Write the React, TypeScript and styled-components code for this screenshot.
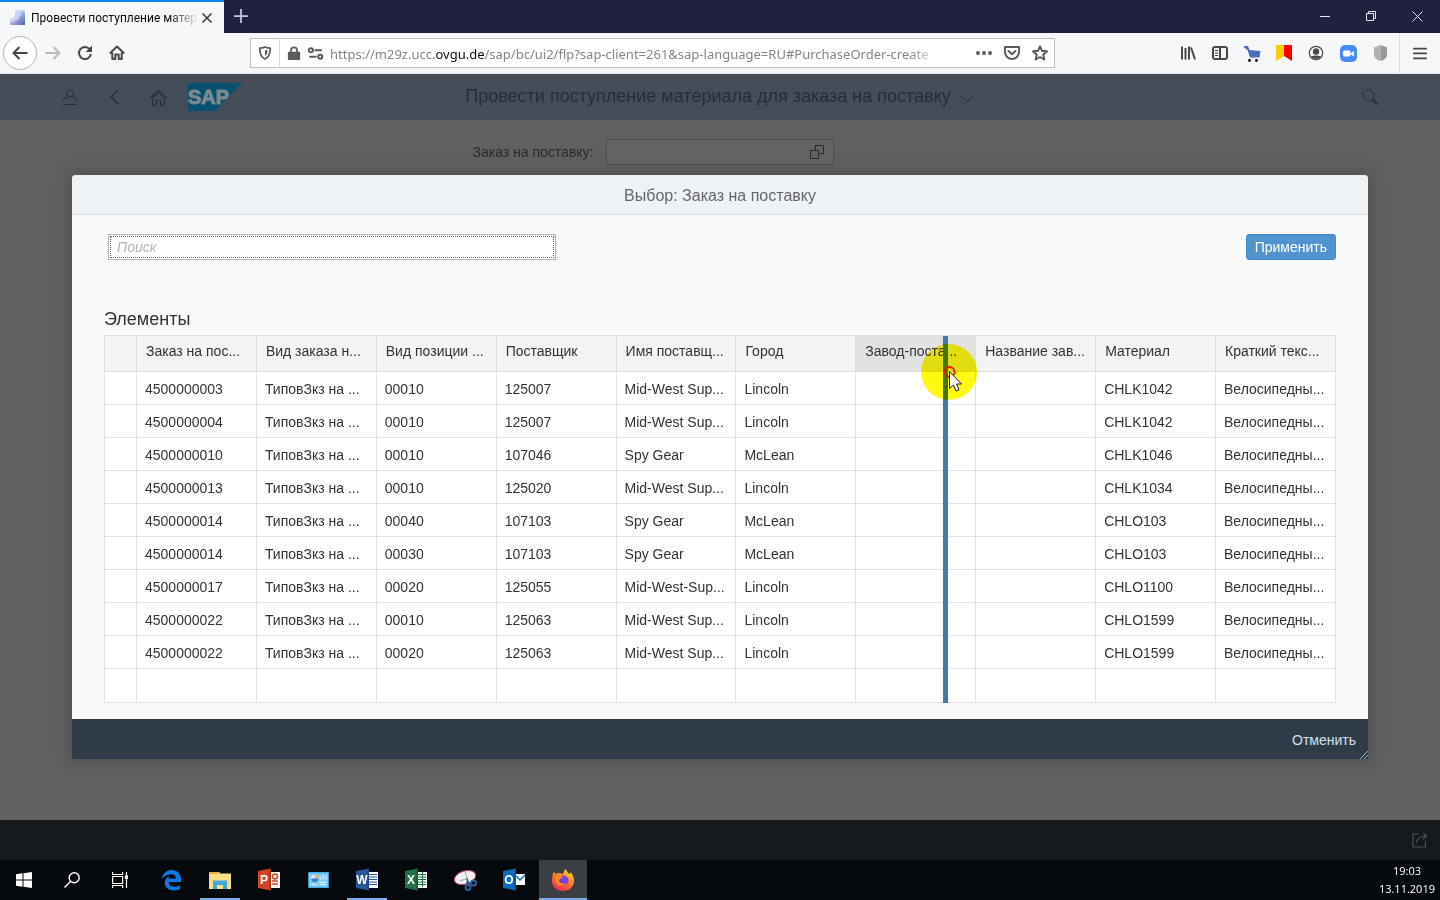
import React from "react";
import styled, { createGlobalStyle } from "styled-components";

const GlobalStyle = createGlobalStyle`
  *, *::before, *::after { box-sizing: border-box; }
  body { margin: 0; background: #606060; }
  button, input { font: inherit; }
`;

const ui = `"Liberation Sans", Arial, sans-serif`;
const system = `"Noto Sans", "Open Sans", sans-serif`;

const Screen = styled.div`
  min-height: 100vh;
  display: flex;
  flex-direction: column;
  font-family: ${ui};
  font-size: 14px;
  color: #333;
`;

const IconButton = styled.button<{ $w?: number; $muted?: boolean }>`
  width: ${(p) => p.$w ?? 32}px;
  height: 32px;
  flex: none;
  padding: 0;
  border: 0;
  background: none;
  color: ${(p) => (p.$muted ? "#b9b9bd" : "inherit")};
  display: flex;
  align-items: center;
  justify-content: center;
`;

/* ---------- browser chrome ---------- */

const TabStrip = styled.header`
  height: 33px;
  display: flex;
  background: #21213f;
  color: #e8e8f4;
`;

const Tab = styled.div`
  width: 224px;
  display: flex;
  align-items: center;
  padding: 0 9px 0 10px;
  background: #f6f7f9;
  border-top: 2px solid #0a84ff;
  color: #0c0c0d;
  font: 12px/16px Roboto, sans-serif;
`;

const Favicon = styled.svg`
  flex: none;
`;

const TabTitle = styled.span`
  flex: 1;
  margin-left: 5px;
  white-space: nowrap;
  mask-image: linear-gradient(to left, transparent, #000 30px);
`;

const TabClose = styled(IconButton)`
  width: 16px;
  height: 22px;
  color: #3c3c40;
`;

const NewTab = styled(IconButton)`
  width: 34px;
  color: #c9c6e2;
`;

const WindowControls = styled.div`
  margin-left: auto;
  display: flex;
`;

const NavBar = styled.nav`
  height: 41px;
  display: flex;
  align-items: center;
  background: #f6f7f9;
  border-bottom: 1px solid #e4e8ec;
  color: #47474c;
`;

const NavGroup = styled.div`
  width: 250px;
  flex: none;
  display: flex;
  align-items: center;
  padding-left: 3px;
`;

const BackButton = styled(IconButton)`
  width: 34px;
  height: 34px;
  border: 1px solid #b4b4b8;
  border-radius: 50%;
  background: #fdfdfd;
`;

const AddressBar = styled.div`
  flex: 1;
  min-width: 0;
  height: 30px;
  display: flex;
  align-items: center;
  background: #fff;
  border: 1px solid #bcc0c4;
  color: #5a5a60;
`;

const Divider = styled.span<{ $h: number }>`
  width: 1px;
  height: ${(p) => p.$h}px;
  background: #dcdcde;
`;

const Url = styled.div`
  flex: 1;
  min-width: 0;
  margin: 2px 30px 0 0;
  white-space: nowrap;
  font: 13px/20px ${system};
  color: #85858a;
  mask-image: linear-gradient(to left, transparent, #000 30px);
  b { font-weight: 400; color: #0c0c0d; }
`;

const Extensions = styled.div`
  width: 385px;
  flex: none;
  display: flex;
  align-items: center;
  justify-content: flex-end;
`;

const MenuArea = styled.div`
  display: flex;
  align-items: center;
  margin-left: 3px;
`;

/* ---------- page ---------- */

const Page = styled.main`
  position: relative;
  flex: 1;
  display: flex;
  flex-direction: column;
  background: #606060;
`;

const Shell = styled.div`
  height: 46px;
  display: flex;
  align-items: center;
  justify-content: space-between;
  padding: 0 54px;
  background: linear-gradient(#484a57, #444e58 12px, #454d57);
  color: #222e3a;
`;

const ShellSide = styled.div`
  flex: 1;
  display: flex;
  align-items: center;
  gap: 12px;
  &:last-child { justify-content: flex-end; }
`;

const Logo = styled.svg`
  margin-left: 2px;
`;

const ShellTitle = styled.h1`
  margin: 0;
  padding-bottom: 2px;
  display: flex;
  align-items: center;
  gap: 8px;
  font-size: 18px;
  line-height: 24px;
  font-weight: 400;
`;

const FormRow = styled.div`
  display: flex;
  align-items: center;
  justify-content: center;
  gap: 12px;
  padding: 19px 134px 0 0;
  color: #2a2a2a;
`;

const OrderField = styled.div`
  width: 228px;
  height: 26px;
  display: flex;
  align-items: center;
  border: 1px solid #4c4c4c;
  background: #636363;
`;

const OrderInput = styled.input`
  flex: 1;
  min-width: 0;
  border: 0;
  padding: 0 8px;
  background: none;
  outline: none;
`;

const Dialog = styled.section`
  position: absolute;
  inset: 101px 5% auto;
  display: flex;
  flex-direction: column;
  border-radius: 4px 4px 0 0;
  overflow: hidden;
  background: #fafafa;
  box-shadow: 0 0 16px rgba(0, 0, 0, 0.25);
`;

const DialogTitle = styled.h2`
  margin: 0;
  height: 40px;
  background: #edf2f7;
  border-bottom: 1px solid #d9dfe5;
  text-align: center;
  font-size: 16px;
  line-height: 42px;
  font-weight: 400;
  color: #666;
`;

const DialogBody = styled.div`
  padding: 19px 32px 16px;
`;

const SearchRow = styled.div`
  display: flex;
  justify-content: space-between;
  padding-left: 4px;
`;

const SearchInput = styled.input`
  width: 448px;
  height: 26px;
  padding: 0 8px;
  border: 1px solid #b4b4b4;
  outline: 1px dotted #666;
  outline-offset: -3px;
  background: #fff;
  &::placeholder { color: #b4b4b4; font-style: italic; opacity: 1; }
`;

const ApplyButton = styled.button`
  height: 26px;
  padding: 0 8px;
  border: 1px solid #428bc8;
  border-radius: 3px;
  background: #5093cf;
  color: #fff;
  line-height: 24px;
`;

const TableTitle = styled.h3`
  margin: 47px 0 4px;
  font-size: 18px;
  line-height: 24px;
  font-weight: 400;
`;

const TableWrap = styled.div`
  position: relative;
`;

const Table = styled.table`
  width: 100%;
  table-layout: fixed;
  border-collapse: collapse;
  background: #fff;
`;

const SelectorCol = styled.col`
  width: 32px;
`;

const HeadCell = styled.th<{ $active?: boolean }>`
  height: 36px;
  padding: 0 0 5px 9px;
  border: 1px solid #dedede;
  background: ${(p) => (p.$active ? "#e2e2e2" : "#f3f3f3")};
  text-align: left;
  font-weight: 400;
  white-space: nowrap;
`;

const Cell = styled.td<{ $last?: boolean }>`
  height: ${(p) => (p.$last ? 34 : 33)}px;
  padding: 1px 0 0 8px;
  border: 1px solid #e2e2e2;
  white-space: nowrap;
`;

const ResizeBar = styled.div`
  position: absolute;
  top: 1px;
  bottom: 0;
  left: calc(68% + 1px);
  width: 5px;
  background: #4479a8;
`;

const PointerHalo = styled.svg`
  position: absolute;
  top: 8px;
  left: calc(68% - 22px);
  mix-blend-mode: multiply;
`;

const PointerArrow = styled.svg`
  position: absolute;
  top: 29px;
  left: 68%;
`;

const DialogFooter = styled.footer`
  position: relative;
  height: 40px;
  display: flex;
  align-items: center;
  justify-content: flex-end;
  padding: 2px 12px 0 0;
  background: #2f3c48;
`;

const CancelButton = styled.button`
  border: 0;
  padding: 0;
  background: none;
  color: #d3e0ea;
  line-height: 20px;
`;

const Grip = styled.svg`
  position: absolute;
  right: 0;
  bottom: 0;
`;

const PageFooter = styled.div`
  height: 40px;
  display: flex;
  align-items: center;
  justify-content: flex-end;
  padding-right: 4px;
  background: #14191d;
  color: #4a5055;
`;

/* ---------- task bar ---------- */

const TaskBar = styled.footer`
  height: 40px;
  display: flex;
  background: #06090d;
  color: #fff;
`;

const TaskApps = styled.div`
  margin-left: 3px;
  display: flex;
  gap: 1px;
`;

const TaskButton = styled.button<{ $state?: "open" | "active" }>`
  width: 48px;
  height: 40px;
  padding: 0;
  border: 0;
  color: inherit;
  display: flex;
  align-items: center;
  justify-content: center;
  background: ${(p) =>
    p.$state === "active"
      ? "linear-gradient(#3b3e43 38px, #76b0e8 38px)"
      : p.$state === "open"
      ? "linear-gradient(#76b0e8, #76b0e8) center bottom / 40px 2px no-repeat"
      : "none"};
`;

const Clock = styled.div`
  margin-left: auto;
  padding: 2px 5px 0 0;
  text-align: center;
  font: 11px/18px "Open Sans", sans-serif;
`;

const columns = [
  "Заказ на пос...", "Вид заказа н...", "Вид позиции ...", "Поставщик", "Имя поставщ...",
  "Город", "Завод-поста...", "Название зав...", "Материал", "Краткий текс...",
];

const MW = "Mid-West Sup...";
const orders = [
  ["4500000003", "00010", "125007", MW, "Lincoln", "CHLK1042"],
  ["4500000004", "00010", "125007", MW, "Lincoln", "CHLK1042"],
  ["4500000010", "00010", "107046", "Spy Gear", "McLean", "CHLK1046"],
  ["4500000013", "00010", "125020", MW, "Lincoln", "CHLK1034"],
  ["4500000014", "00040", "107103", "Spy Gear", "McLean", "CHLO103"],
  ["4500000014", "00030", "107103", "Spy Gear", "McLean", "CHLO103"],
  ["4500000017", "00020", "125055", "Mid-West-Sup...", "Lincoln", "CHLO1100"],
  ["4500000022", "00010", "125063", MW, "Lincoln", "CHLO1599"],
  ["4500000022", "00020", "125063", MW, "Lincoln", "CHLO1599"],
];

type IconProps = { size?: number; sw?: number; children: React.ReactNode };
const Icon = ({ size = 16, sw = 2, children }: IconProps) => (
  <svg width={size} height={size} viewBox="0 0 16 16" fill="none" stroke="currentColor" strokeWidth={sw} strokeLinejoin="round" aria-hidden="true">
    {children}
  </svg>
);

const Office = ({ letter, color, dark, children }: { letter: string; color: string; dark: string; children: React.ReactNode }) => (
  <svg width="24" height="24" viewBox="0 0 24 24" aria-hidden="true">
    <path d="M12 4h11v16H12z" fill="#fff" />
    {children}
    <path d="M1 3l13-2.500v22L1 20z" fill={color} />
    <path d="M12 .900l2-.400v22l-2-.300z" fill={dark} opacity=".5" />
    <text x="7" y="16" textAnchor="middle" fontFamily="Liberation Sans" fontWeight="700" fontSize="12" fill="#fff">{letter}</text>
  </svg>
);

export default function App() {
  return (
    <Screen>
      <GlobalStyle />
      <TabStrip>
        <Tab>
          <Favicon width="16" height="16" viewBox="0 0 16 16" aria-hidden="true">
            <defs>
              <linearGradient id="fav" x1="0" y1="0" x2="1" y2="1">
                <stop offset="0" stopColor="#8fe0f4" />
                <stop offset=".5" stopColor="#b9a5dc" />
                <stop offset="1" stopColor="#3a62b8" />
              </linearGradient>
              <linearGradient id="favSide" x1="0" y1="0" x2="0" y2="1">
                <stop offset="0" stopColor="#9be6f8" />
                <stop offset="1" stopColor="#4a63b4" />
              </linearGradient>
            </defs>
            <path d="M5 1l8-1 2 1v14H0V9q6 0 5-8z" fill="url(#fav)" />
            <path d="M5 1l8-1-4 8q-3 4-9 4V9q6 0 5-8z" fill="#cfe6fa" opacity=".7" />
            <path d="M13 0l2 1v14h-3z" fill="url(#favSide)" opacity=".7" />
          </Favicon>
          <TabTitle>Провести поступление матер</TabTitle>
          <TabClose aria-label="Закрыть вкладку">
            <Icon size={12}><path d="M2 2l12 12M14 2L2 14" /></Icon>
          </TabClose>
        </Tab>
        <NewTab aria-label="Новая вкладка"><Icon size={14}><path d="M8 0v16M0 8h16" /></Icon></NewTab>
        <WindowControls>
          <IconButton $w={46} aria-label="Свернуть"><svg width="10" height="10" stroke="currentColor"><path d="M0 5.500h10" /></svg></IconButton>
          <IconButton $w={46} aria-label="Развернуть">
            <svg width="11" height="11" fill="none" stroke="currentColor"><path d="M.500 2.500h7v7h-7zM2.500 2.500v-2h7v7h-2" /></svg>
          </IconButton>
          <IconButton $w={46} aria-label="Закрыть"><svg width="11" height="11" stroke="currentColor"><path d="M.500.500l10 10M10.500.500l-10 10" /></svg></IconButton>
        </WindowControls>
      </TabStrip>

      <NavBar>
        <NavGroup>
          <BackButton aria-label="Назад"><Icon><path d="M15.500 8H1.500M7.500 2L1.500 8l6 6" /></Icon></BackButton>
          <IconButton $muted aria-label="Вперёд"><Icon><path d="M.500 8h14M8.500 2l6 6-6 6" /></Icon></IconButton>
          <IconButton aria-label="Обновить">
            <Icon><path d="M12.600 4.200A6 6 0 1 0 13.900 9" /><path d="M15 .500v6.500H8.800z" fill="currentColor" stroke="none" /></Icon>
          </IconButton>
          <IconButton aria-label="Домой">
            <Icon><path d="M.800 8.500L8 1.500l7.200 7M3.300 7.500V14h3V9.500h3.400V14h3V7.500" /></Icon>
          </IconButton>
        </NavGroup>
        <AddressBar>
          <IconButton $w={28} aria-label="Защита">
            <Icon size={14}><path d="M8 1.200c2 1 4 1.300 6 1.300 0 6-1 10-6 12.300C3 12.500 2 8.500 2 2.500c2 0 4-.300 6-1.300z" /><path d="M8 4.500v6.500c2-1 3-3 3-6z" fill="currentColor" stroke="none" /></Icon>
          </IconButton>
          <Divider $h={28} />
          <IconButton $w={28} aria-label="Соединение защищено">
            <Icon size={14}><path d="M2 7.500h12V15H2z" fill="currentColor" /><path d="M4.500 7V5a3.500 3.500 0 0 1 7 0v2" /></Icon>
          </IconButton>
          <IconButton $w={22} aria-label="Разрешения">
            <svg width="22" height="13" viewBox="0 0 27 16" fill="none" stroke="currentColor" strokeWidth="2.500">
              <circle cx="3.500" cy="4" r="2.500" /><path d="M8 4h9M1.500 12h9" /><circle cx="15" cy="12" r="2.500" />
            </svg>
          </IconButton>
          <Url>https://m29z.ucc.<b>ovgu.de</b>/sap/bc/ui2/flp?sap-client=261&amp;sap-language=RU#PurchaseOrder-create</Url>
          <IconButton $w={28} aria-label="Действия">
            <Icon><g fill="currentColor" stroke="none"><circle cx="2" cy="8" r="2" /><circle cx="8" cy="8" r="2" /><circle cx="14" cy="8" r="2" /></g></Icon>
          </IconButton>
          <IconButton $w={28} aria-label="Pocket">
            <Icon><path d="M1 2h14v5a7 7 0 0 1-14 0z" /><path d="M4.500 6L8 9.200 11.500 6" strokeLinecap="round" /></Icon>
          </IconButton>
          <IconButton $w={28} aria-label="Закладка">
            <Icon><path d="M8 1.300l2 4.500 5 .500-3.700 3.300 1 4.900L8 12l-4.300 2.500 1-4.900L1 6.300l5-.500z" /></Icon>
          </IconButton>
        </AddressBar>
        <Extensions>
          <IconButton aria-label="Библиотека"><Icon><path d="M2 1.500v13M5.500 3v11.500M9 1.500v13M11 2.500l4 12" /></Icon></IconButton>
          <IconButton aria-label="Боковая панель">
            <Icon><rect x="1" y="2" width="14" height="12" rx="2" /><path d="M8 2v12" /><path d="M3 5.500h3M3 8h3M3 10.500h3" strokeWidth="1" /></Icon>
          </IconButton>
          <IconButton aria-label="Покупки">
            <svg width="17" height="17" viewBox="0 0 17 17">
              <path d="M0 1h4l1.500 4L16.500 6l-1 6.500H6L3.500 5 0 2.500z" fill="#4a6fbd" /><circle cx="5.500" cy="15.500" r="1.400" /><circle cx="12.500" cy="15.500" r="1.400" />
            </svg>
          </IconButton>
          <IconButton aria-label="Закладки">
            <svg width="16" height="16" viewBox="0 0 16 16"><path d="M0 0h8v11l-8 5z" fill="#fc0" /><path d="M8 0h8v16l-8-5z" fill="#f00" /></svg>
          </IconButton>
          <IconButton aria-label="Учётная запись">
            <Icon sw={1.2}><circle cx="8" cy="8" r="6.700" /><circle cx="8" cy="6.500" r="2.600" fill="currentColor" /><path d="M4 11.800c2-1 6-1 8 0-2 1.800-6 1.800-8 0z" fill="currentColor" /></Icon>
          </IconButton>
          <IconButton aria-label="Zoom">
            <svg width="17" height="17" viewBox="0 0 17 17"><rect width="17" height="17" rx="5" fill="#4a8cf5" /><rect x="3" y="5.500" width="7.500" height="6" rx="1.500" fill="#fff" /><path d="M11 8l3-2v5.500l-3-2z" fill="#fff" /></svg>
          </IconButton>
          <IconButton aria-label="Щит">
            <svg width="13" height="16" viewBox="0 0 13 16"><path d="M0 2.500L6.500 0v16Q0 14 0 10z" fill="#b0b0b0" /><path d="M13 2.500L6.500 0v16Q13 14 13 10z" fill="#979797" /></svg>
          </IconButton>
          <MenuArea>
            <Divider $h={40} />
            <IconButton $w={40} aria-label="Меню"><Icon size={14}><path d="M1 3h14M1 8.500h14M1 14h14" strokeLinecap="round" /></Icon></IconButton>
          </MenuArea>
        </Extensions>
      </NavBar>

      <Page>
        <Shell>
          <ShellSide>
            <IconButton aria-label="Пользователь">
              <Icon sw={1}><circle cx="8" cy="4.500" r="3.500" /><path d="M6 8c-3 .500-4.500 2-4.500 4v.500M10 8c3 .500 4.500 2 4.500 4v.500M1 15.500h14" /></Icon>
            </IconButton>
            <IconButton aria-label="Назад"><Icon sw={1.4}><path d="M12 1L5 8l7 7" /></Icon></IconButton>
            <IconButton aria-label="Домой">
              <Icon size={17} sw={1}><path d="M0 8.500L8 1l8 7.500M2 9l6-5.500L14 9M2.500 9v6.500h3.500v-5h4v5h3.500V9" /></Icon>
            </IconButton>
            <Logo width="56" height="28" viewBox="0 0 56 28" role="img" aria-label="SAP">
              <path d="M0 0h54L27 28H0z" fill="#07506f" />
              <text x="0" y="21" fontFamily="Liberation Sans" fontWeight="700" fontSize="20" fill="#7d8a90" stroke="#7d8a90">SAP</text>
            </Logo>
          </ShellSide>
          <ShellTitle>
            Провести поступление материала для заказа на поставку
            <Icon sw={1}><path d="M1 7l7 7 7-7" /></Icon>
          </ShellTitle>
          <ShellSide>
            <IconButton aria-label="Поиск"><Icon sw={1}><circle cx="6.500" cy="6.500" r="5.500" /><path d="M10.500 10.500l5 5" strokeWidth="2" /></Icon></IconButton>
          </ShellSide>
        </Shell>
        <FormRow>
          <label htmlFor="order">Заказ на поставку:</label>
          <OrderField>
            <OrderInput id="order" />
            <IconButton aria-label="Выбрать заказ"><Icon sw={1}><path d="M1.500 6.500h8v8h-8zM6.500 6V1.500h8v8H10" /></Icon></IconButton>
          </OrderField>
        </FormRow>

        <Dialog role="dialog" aria-labelledby="dialog-title">
          <DialogTitle id="dialog-title">Выбор: Заказ на поставку</DialogTitle>
          <DialogBody>
            <SearchRow>
              <SearchInput placeholder="Поиск" aria-label="Поиск" />
              <ApplyButton>Применить</ApplyButton>
            </SearchRow>
            <TableTitle>Элементы</TableTitle>
            <TableWrap>
              <Table>
                <colgroup>
                  <SelectorCol />
                  {columns.map((c) => <col key={c} />)}
                </colgroup>
                <thead>
                  <tr>
                    <HeadCell />
                    {columns.map((c, i) => <HeadCell key={c} scope="col" $active={i === 6}>{c}</HeadCell>)}
                  </tr>
                </thead>
                <tbody>
                  {orders.map(([order, item, vendor, name, city, material], i) => (
                    <tr key={i}>
                      <Cell /><Cell>{order}</Cell><Cell>ТиповЗкз на ...</Cell><Cell>{item}</Cell><Cell>{vendor}</Cell>
                      <Cell>{name}</Cell><Cell>{city}</Cell><Cell /><Cell /><Cell>{material}</Cell><Cell>Велосипедны...</Cell>
                    </tr>
                  ))}
                  <tr>
                    <Cell $last />
                    {columns.map((c) => <Cell $last key={c} />)}
                  </tr>
                </tbody>
              </Table>
              <ResizeBar />
              <PointerHalo width="58" height="58" aria-hidden="true"><circle cx="29" cy="29" r="28" fill="#fffa00" fillOpacity=".94" /></PointerHalo>
              <PointerArrow width="24" height="30" fill="none" aria-hidden="true">
                <circle cx="7.500" cy="8" r="5" stroke="#f01800" strokeWidth="2" />
                <path d="M7.500 7.500v17l4-3.500 2.500 6 3-1.300-2.500-5.700h5z" fill="#fff" stroke="#222" />
              </PointerArrow>
            </TableWrap>
          </DialogBody>
          <DialogFooter>
            <CancelButton>Отменить</CancelButton>
            <Grip width="9" height="9" stroke="#8fb0c8" aria-hidden="true"><path d="M1 9l8-8M5 9l4-4" /></Grip>
          </DialogFooter>
        </Dialog>
      </Page>

      <PageFooter>
        <IconButton aria-label="Поделиться">
          <Icon sw={1.2}><path d="M7 2H1v13h12.500V9M4.500 11C5 6 8 4 14 4M11 1l3.500 3L11 7.500" /></Icon>
        </IconButton>
      </PageFooter>

      <TaskBar>
        <TaskButton aria-label="Пуск">
          <svg width="16" height="16" fill="currentColor"><path d="M0 2.300l6.500-1v6.200H0zM7.500 1.200L16 0v7.500H7.500zM0 8.500h6.500v6.200l-6.500-1zM7.500 8.500H16V16l-8.500-1.200z" /></svg>
        </TaskButton>
        <TaskButton aria-label="Поиск"><Icon sw={1.4}><circle cx="10.200" cy="5.800" r="5" /><path d="M6.700 9.300L.500 15.500" /></Icon></TaskButton>
        <TaskButton aria-label="Представление задач">
          <Icon sw={1.2}><path d="M.600 0v2.500h10V0M.600 16v-2.500h10V16M.600 4.500h10v7H.600zM14.500 0v16" /><path d="M13.500 4h2v2.500h-2z" fill="currentColor" /></Icon>
        </TaskButton>
        <TaskApps>
          <TaskButton aria-label="Edge">
            <svg width="21" height="22" viewBox="0 0 22 22"><path d="M1 10C2 3.500 6 .500 11 .500c6.500 0 10 4.500 10 9.500v3H8c0 3.500 3 5 6.500 5 2.200 0 4-.500 5.500-1.500v4c-2 1-4 1.500-6.500 1.500C8 22 4 19 4 14c0-3.500 2-6 5-7.200-.700.800-1 1.700-1.200 2.700h7.700c0-2.700-1.500-4.500-4.500-4.500C7 5 3.500 7 1 10z" fill="#0c7ae0" /></svg>
          </TaskButton>
          <TaskButton $state="open" aria-label="Проводник">
            <svg width="22" height="19" viewBox="0 0 22 19"><path d="M0 1h10l1.500 1.500H22V18H0z" fill="#f8de84" /><path d="M0 1h10v2H0z" fill="#e2b53f" /><path d="M4 9.500h14V18h-4v-4H8v4H4z" fill="#41a8dc" /></svg>
          </TaskButton>
          <TaskButton aria-label="PowerPoint">
            <Office letter="P" color="#d04423" dark="#8c2a12"><path d="M15 13h6M15 16h6" stroke="#d04423" strokeWidth="1.500" /><circle cx="18" cy="8.500" r="2.500" fill="none" stroke="#d04423" strokeWidth="1.500" /></Office>
          </TaskButton>
          <TaskButton aria-label="Панель управления">
            <svg width="21" height="16" viewBox="0 0 22 17"><rect width="22" height="17" rx="1" fill="#49aee4" /><rect x="1" y="1.500" width="20" height="14" fill="#7fcdf4" /><circle cx="7" cy="7" r="4" fill="#d9f0fb" /><path d="M7 7V3a4 4 0 0 1 4 4z" fill="#f3b04e" /><path d="M7 7l4 0a4 4 0 0 1-8 0z" fill="#2f86c4" /><path d="M13 8v-3M16 8v-5M19 8v-4M4 13.500h5M12 11h7M12 13.500h7" stroke="#d9f0fb" strokeWidth="1.300" /></svg>
          </TaskButton>
          <TaskButton $state="open" aria-label="Word">
            <Office letter="W" color="#2b579a" dark="#1b3a6b"><path d="M14 6.500h8M14 9h8M14 11.500h8M14 14h8M14 16.500h8" stroke="#2b579a" /></Office>
          </TaskButton>
          <TaskButton aria-label="Excel">
            <Office letter="X" color="#1f7245" dark="#124a2b"><path d="M14 6.500h8M14 9h8M14 11.500h8M14 14h8M14 16.500h8M18.500 4v15" stroke="#1f7245" /></Office>
          </TaskButton>
          <TaskButton aria-label="Ножницы">
            <svg width="24" height="22" viewBox="0 0 24 22"><ellipse cx="12" cy="8.500" rx="11" ry="6.500" transform="rotate(-18 12 8.500)" fill="#f4eef0" stroke="#b8425a" /><path d="M12 2l3 11M7 12l8-3" stroke="#9aa" /><g fill="none" stroke="#2a6298" strokeWidth="2"><circle cx="20.500" cy="14" r="2.500" /><circle cx="15" cy="18.500" r="2.500" /><path d="M14 10l2 6M13 14l5 0" /></g></svg>
          </TaskButton>
          <TaskButton aria-label="Outlook">
            <Office letter="O" color="#0a6cc0" dark="#084a86"><path d="M14 7h9v9h-9z" fill="#fff" /><path d="M12 3h11v3H12zM12 17h11v3H12z" fill="#06090d" /><path d="M14 8l4 4 5-5" fill="none" stroke="#0a6cc0" strokeWidth="1.500" /></Office>
          </TaskButton>
          <TaskButton $state="active" aria-label="Firefox">
            <svg width="24" height="24" viewBox="0 0 24 24">
              <defs><linearGradient id="fx" x1=".9" y1="0" x2=".3" y2="1"><stop offset="0" stopColor="#ffe83a" /><stop offset=".45" stopColor="#ff8a1e" /><stop offset="1" stopColor="#f5264f" /></linearGradient></defs>
              <path d="M3 3c.500 2 1 2.500 2 3 1-1 2-1.300 3.500-1L12 6c1-2 1-4 3-5 .500 2.500 2 3.500 3.500 5 1-.500 1-1 1-2 2.500 3 3.500 6 3.500 9 0 6-5 10-11 10S1 19 1 13C1 9 1.500 6 3 3z" fill="url(#fx)" />
              <circle cx="12.500" cy="12.500" r="5" fill="#7b3fe0" /><path d="M4 8c3-2 6 0 8 1-1 2-4 1-4 3.500 0 3 4 4 7 2-2 5-10 4-10.500-1z" fill="#ff8a1e" />
            </svg>
          </TaskButton>
        </TaskApps>
        <Clock>19:03<br />13.11.2019</Clock>
      </TaskBar>
    </Screen>
  );
}
